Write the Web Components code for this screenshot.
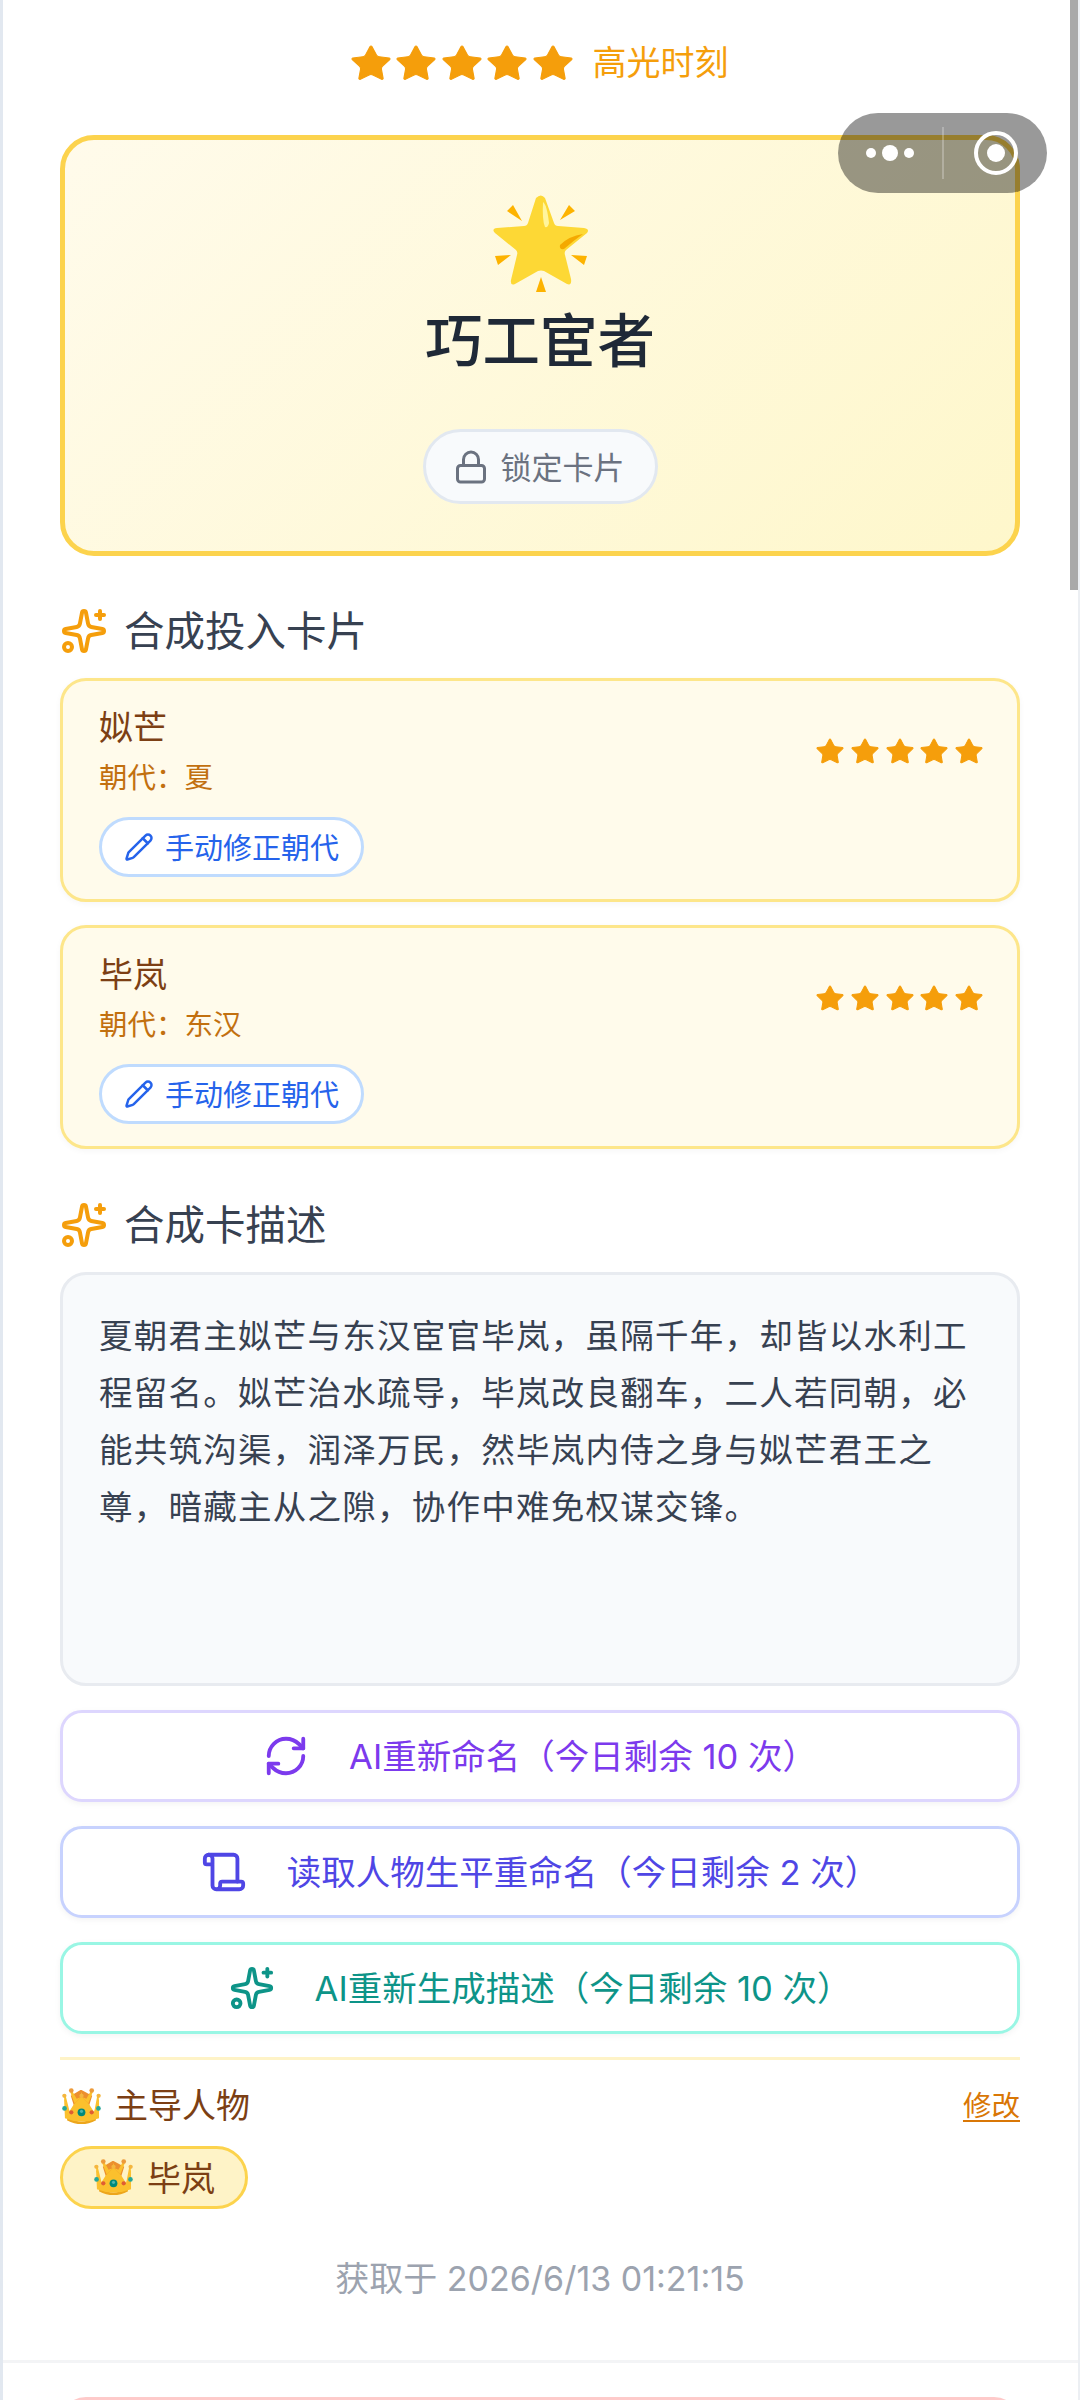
<!DOCTYPE html>
<html lang="zh-CN">
<head>
<meta charset="utf-8">
<title>高光时刻</title>
<style>
  html,body{margin:0;padding:0;background:#fff}
  body{width:1080px;height:2400px;overflow:hidden;font-family:Inter,"Noto Sans CJK SC",sans-serif}
  app-page > *{flex:none}
  section-title{margin-top:50px}
  section-title + source-card{margin-top:22px}
  source-card + source-card{margin-top:23px}
  source-card + section-title{margin-top:51px}
  desc-box{margin-top:22px}
  action-button{margin-top:24px}
  lead-section{margin-top:23px}
  stamp-line{margin-top:45px}
</style>
</head>
<body>
<app-page>
  <rating-head>高光时刻</rating-head>
  <hero-card name="巧工宦者" lock="锁定卡片"></hero-card>

  <section-title>合成投入卡片</section-title>
  <source-card name="姒芒" dynasty="朝代：夏"></source-card>
  <source-card name="毕岚" dynasty="朝代：东汉"></source-card>

  <section-title>合成卡描述</section-title>
  <desc-box>夏朝君主姒芒与东汉宦官毕岚，虽隔千年，却皆以水利工程留名。姒芒治水疏导，毕岚改良翻车，二人若同朝，必能共筑沟渠，润泽万民，然毕岚内侍之身与姒芒君王之尊，暗藏主从之隙，协作中难免权谋交锋。</desc-box>

  <action-button icon="refresh" tone="violet">AI重新命名（今日剩余 10 次）</action-button>
  <action-button icon="scroll" tone="indigo">读取人物生平重命名（今日剩余 2 次）</action-button>
  <action-button icon="sparkles" tone="teal">AI重新生成描述（今日剩余 10 次）</action-button>

  <lead-section who="毕岚"></lead-section>
  <stamp-line>获取于 2026/6/13 01:21:15</stamp-line>
  <page-rule></page-rule>
  <notice-card></notice-card>
  <mini-capsule></mini-capsule>
</app-page>

<script>
(function () {
  const STAR = 'M11.525 2.295a.53.53 0 0 1 .95 0l2.31 4.679a2.123 2.123 0 0 0 1.595 1.16l5.166.756a.53.53 0 0 1 .294.904l-3.736 3.638a2.123 2.123 0 0 0-.611 1.878l.882 5.14a.53.53 0 0 1-.771.56l-4.618-2.428a2.122 2.122 0 0 0-1.973 0L6.396 21.01a.53.53 0 0 1-.77-.56l.881-5.139a2.122 2.122 0 0 0-.611-1.879L2.16 9.795a.53.53 0 0 1 .294-.906l5.165-.755a2.122 2.122 0 0 0 1.597-1.16z';
  const ICONS = {
    sparkles: '<path d="M11.017 2.814a1 1 0 0 1 1.966 0l1.051 5.558a2 2 0 0 0 1.594 1.594l5.558 1.051a1 1 0 0 1 0 1.966l-5.558 1.051a2 2 0 0 0-1.594 1.594l-1.051 5.558a1 1 0 0 1-1.966 0l-1.051-5.558a2 2 0 0 0-1.594-1.594l-5.558-1.051a1 1 0 0 1 0-1.966l5.558-1.051a2 2 0 0 0 1.594-1.594z"/><path d="M20 2v4"/><path d="M22 4h-4"/><circle cx="4" cy="20" r="2"/>',
    refresh: '<path d="M3 12a9 9 0 0 1 9-9 9.75 9.75 0 0 1 6.74 2.74L21 8"/><path d="M21 3v5h-5"/><path d="M21 12a9 9 0 0 1-9 9 9.75 9.75 0 0 1-6.74-2.74L3 16"/><path d="M8 16H3v5"/>',
    scroll: '<path d="M19 17V5a2 2 0 0 0-2-2H4"/><path d="M8 21h12a2 2 0 0 0 2-2v-1a1 1 0 0 0-1-1H11a1 1 0 0 0-1 1v1a2 2 0 1 1-4 0V5a2 2 0 1 0-4 0v2a1 1 0 0 0 1 1h3"/>',
    pencil: '<path d="M21.174 6.812a1 1 0 0 0-3.986-3.987L3.842 16.174a2 2 0 0 0-.5.83l-1.321 4.352a.5.5 0 0 0 .623.622l4.353-1.32a2 2 0 0 0 .83-.497z"/><path d="m15 5 4 4"/>',
    lock: '<rect x="3" y="11" width="18" height="11" rx="2"/><path d="M7 11V7a5 5 0 0 1 10 0v4"/>'
  };
  const icon = (n, size, sw) => '<svg width="' + size + '" height="' + size + '" viewBox="0 0 24 24" fill="none" stroke="currentColor" stroke-width="' + sw + '" stroke-linecap="round" stroke-linejoin="round" aria-hidden="true">' + ICONS[n] + '</svg>';
  const stars = (w, h, sw) => Array(5).fill('<svg width="' + w + '" height="' + h + '" viewBox="2 2 20 20" preserveAspectRatio="none" fill="#f59e0b" stroke="#f59e0b" stroke-width="' + sw + '" stroke-linejoin="round" style="overflow:visible"><path d="' + STAR + '"/></svg>').join('');

  // Noto-like 🌟 and 👑, no emoji font in the sandbox
  const GLOW = '<svg width="95" height="98" viewBox="0 0 95 98" aria-hidden="true">' +
    '<path d="M14 16 L20 10 L29 26Z M82 16 L76 10 L67 25Z M2 61 L18 60 L5 70Z M94 61 L78 60 L91 70Z M48 82 L43 97 L53 97Z" fill="#fdb300"/>' +
    '<path d="M43 3 Q48 -2 52 3 L61 28 Q62 31 65 31 L91 33 Q97 34 94 38 L73 55 Q71 57 72 60 L78 84 Q79 91 74 89 L51 76 Q48 75 45 76 L22 89 Q17 91 18 85 L24 60 Q25 57 23 55 L2 38 Q-2 34 4 33 L31 31 Q34 31 35 28Z" fill="#fdd835"/>' +
    '<path d="M50 7 Q54 10 56 28 Q55 33 52 32 Q49 25 50 7Z" fill="#fff59d"/>' +
    '<path d="M90 39 Q76 41 67 50 Q66 55 71 54 Q80 46 90 39Z" fill="#f4a900"/></svg>';
  const CROWN = (w, h) => '<svg width="' + w + '" height="' + h + '" viewBox="0 0 40 38" aria-hidden="true">' +
    '<path d="M6 30 Q20 39 34 30 L35 33 Q20 41 5 33Z" fill="#eda61c"/>' +
    '<path d="M9 8 L19 2 L20 2 L31 8 L26 24 L14 24Z" fill="#ec8f2d"/>' +
    '<path d="M2 9 L7 25 L12 17 L20 9 L28 17 L33 25 L38 9 L38 31 Q20 38 3 31Z" fill="#fbc02d"/>' +
    '<path d="M2 9 L4 9 L8 25 L6 28Z M38 9 L36 9 L33 25 L34 28Z" fill="#fbc02d"/>' +
    '<path d="M20 9 L13 16 L8 3 L10.5 3 L15 11Z M20 9 L27 16 L32 3 L29.5 3 L25 11Z M19 8 L20 4 L21 8Z" fill="#fbc02d"/>' +
    '<circle cx="2.4" cy="8" r="2.2" fill="#f4b63f"/><circle cx="37.6" cy="8" r="2.2" fill="#f4b63f"/><circle cx="9.5" cy="2.6" r="2.4" fill="#ec9a3a"/><circle cx="30.5" cy="2.6" r="2.4" fill="#ec9a3a"/><circle cx="20" cy="8" r="2.2" fill="#f4b63f"/>' +
    '<circle cx="20" cy="25" r="4" fill="#00897b"/><circle cx="20" cy="24" r="1.6" fill="#4db6ac"/>' +
    '<circle cx="9.5" cy="25" r="2.2" fill="#e05d33"/><circle cx="30.5" cy="25" r="2.2" fill="#e05d33"/>' +
    '<circle cx="2.6" cy="21" r="2.4" fill="#26a69a"/><circle cx="37.4" cy="21" r="2.4" fill="#26a69a"/></svg>';

  // base: builds an open shadow root from css + html
  class Base extends HTMLElement {
    connectedCallback() {
      if (this.shadowRoot) return;
      this.attachShadow({ mode: 'open' }).innerHTML = '<style>' + this.css() + '</style>' + this.html();
    }
    attr(n, d) { return this.getAttribute(n) !== null ? this.getAttribute(n) : (d || ''); }
  }

  class AppPage extends Base {
    css() { return `:host{display:flex;flex-direction:column;position:relative;box-sizing:border-box;width:1080px;height:2400px;padding:0 58px 0 57px;border-left:3px solid #e2e8f0;border-right:2px solid #eceff3;overflow:hidden;color:#1f2937}
      .bar{position:absolute;top:0;right:-2px;width:10px;height:590px;background:#a9a9a9}`; }
    html() { return '<slot></slot><div class="bar"></div>'; }
  }

  class RatingHead extends Base {
    css() { return `:host{display:flex;justify-content:center;align-items:center;margin-top:44px;height:38px}
      .s{display:flex;gap:7.5px;margin-right:21px}
      .t{font-size:34px;line-height:38px;color:#f59e0b}`; }
    html() { return '<div class="s">' + stars(38, 35, 0.6) + '</div><div class="t"><slot></slot></div>'; }
  }

  class HeroCard extends Base {
    css() { return `:host{display:flex;flex-direction:column;align-items:center;box-sizing:border-box;height:421px;margin-top:53px;padding-top:55px;border:5px solid #fcd34d;border-radius:34px;background:linear-gradient(135deg,#fffbeb,#fef7cb)}
      svg{display:block;flex:none}
      .n{margin-top:13px;font-size:57.5px;line-height:70px;font-weight:500;color:#1f2937}
      .l{display:flex;align-items:center;gap:12px;box-sizing:border-box;height:75px;margin-top:53px;padding:0 30px 0 27px;border:3px solid #e2e8f0;border-radius:38px;background:#f8fafc;color:#6b7280;font-size:31px}
      .l span{margin-top:-3px}`; }
    html() { return GLOW + '<div class="n">' + this.attr('name') + '</div><div class="l">' + icon('lock', 36, 2) + '<span>' + this.attr('lock') + '</span></div>'; }
  }

  class SectionTitle extends Base {
    css() { return `:host{display:flex;align-items:center;gap:16px;height:50px;font-size:40.5px;color:#374151}
      svg{display:block;color:#f59e0b}
      span{margin-top:-5px}`; }
    html() { return icon('sparkles', 48, 2) + '<span><slot></slot></span>'; }
  }

  class SourceCard extends Base {
    css() { return `:host{display:flex;justify-content:space-between;box-sizing:border-box;height:224px;padding:25px 35px 0 36px;border:3px solid #fde68a;border-radius:26px;background:#fffbeb;box-shadow:0 2px 6px rgba(0,0,0,.04)}
      .n{font-size:34px;line-height:44px;font-weight:400;color:#7c3f14}
      .d{margin-top:8px;font-size:28.5px;line-height:40px;color:#c2700f}
      .e{display:flex;align-items:center;gap:11px;box-sizing:border-box;width:265px;height:60px;margin-top:19px;padding-left:22px;border:3px solid #bfdbfe;border-radius:30px;background:#fff;color:#2563eb;font-size:29px;white-space:nowrap}
      .e span{margin-top:-2px}
      .s{display:flex;gap:8.7px;margin-top:33px}`; }
    html() { return '<div><div class="n">' + this.attr('name') + '</div><div class="d">' + this.attr('dynasty') + '</div><div class="e">' + icon('pencil', 30, 2) + '<span>手动修正朝代</span></div></div><div class="s">' + stars(26, 25, 0.8) + '</div>'; }
  }

  class DescBox extends Base {
    css() { return `:host{display:block;box-sizing:border-box;height:414px;padding:33px 32px 0 36px;border:3px solid #e8ebf0;border-radius:26px;background:#f8fafc;color:#374151;font-size:33.5px;line-height:57px;letter-spacing:1.25px}`; }
    html() { return '<slot></slot>'; }
  }

  const TONES = {
    violet: ['#7c3aed', '#ddd6fe'],
    indigo: ['#4f46e5', '#c7d2fe'],
    teal: ['#0d9488', '#99f6e4']
  };
  class ActionButton extends Base {
    css() {
      const t = TONES[this.attr('tone', 'violet')];
      return `:host{display:flex;align-items:center;justify-content:center;gap:40px;box-sizing:border-box;height:92px;border:3px solid ${t[1]};border-radius:22px;background:#fff;color:${t[0]};font-size:34.5px;font-weight:400;box-shadow:0 2px 6px rgba(0,0,0,.05);white-space:nowrap}
      svg{display:block;flex:none;margin-top:-1px}
      span{margin-top:-5px}`;
    }
    html() { return icon(this.attr('icon'), 46, 2) + '<span><slot></slot></span>'; }
  }

  class LeadSection extends Base {
    css() { return `:host{display:block;border-top:3px solid #fef3c7}
      .r{display:flex;align-items:center;height:48px;margin-top:22px;color:#7c3f14;font-size:34px;font-weight:400}
      .r svg{margin:0 13px 0 2px}
      .r span,.r a{margin-top:-5px}
      .r a{margin-left:auto;color:#d97706;font-size:28.5px;text-decoration:underline;text-underline-offset:4px}
      .p{display:inline-flex;align-items:center;gap:14px;box-sizing:border-box;height:63px;margin-top:16px;padding:0 30px 0 31px;border:3px solid #fcd34d;border-radius:32px;background:#fef3c7;color:#7c3f14;font-size:34px;font-weight:400}
      .p span{margin-top:-3px}
      svg{display:block;flex:none}`; }
    html() { return '<div class="r">' + CROWN(39, 37) + '<span>主导人物</span><a>修改</a></div><div class="p">' + CROWN(39, 37) + '<span>' + this.attr('who') + '</span></div>'; }
  }

  class StampLine extends Base {
    css() { return `:host{display:block;height:50px;text-align:center;color:#9ca3af;font-size:34px;line-height:50px}`; }
    html() { return '<slot></slot>'; }
  }

  class PageRule extends Base {
    css() { return `:host{display:block;height:3px;margin:56px -58px 0 -57px;background:#f3f4f6}`; }
    html() { return ''; }
  }

  class NoticeCard extends Base {
    css() { return `:host{display:block;height:120px;margin-top:34px;border:3px solid #fecaca;border-radius:26px;background:#fef2f2}`; }
    html() { return ''; }
  }

  // wechat mini program capsule, floats over the page
  class MiniCapsule extends Base {
    css() { return `:host{position:absolute;top:113px;left:835px;display:flex;align-items:center;box-sizing:border-box;width:209px;height:80px;border-radius:40px;background:rgba(0,0,0,.4)}
      .m{display:flex;align-items:center;justify-content:center;gap:6px;width:104px}
      .m i{display:block;width:10px;height:10px;border-radius:50%;background:#fff}
      .m i:nth-child(2){width:16px;height:16px}
      .v{width:2px;height:52px;background:rgba(255,255,255,.25)}
      .o{display:flex;align-items:center;justify-content:center;width:103px}
      .c{display:flex;align-items:center;justify-content:center;box-sizing:border-box;width:44px;height:44px;border:4px solid #fff;border-radius:50%}
      .c i{display:block;width:18px;height:18px;border-radius:50%;background:#fff}`; }
    html() { return '<div class="m"><i></i><i></i><i></i></div><div class="v"></div><div class="o"><div class="c"><i></i></div></div>'; }
  }

  const defs = { 'app-page': AppPage, 'rating-head': RatingHead, 'hero-card': HeroCard, 'section-title': SectionTitle, 'source-card': SourceCard, 'desc-box': DescBox, 'action-button': ActionButton, 'lead-section': LeadSection, 'stamp-line': StampLine, 'page-rule': PageRule, 'notice-card': NoticeCard, 'mini-capsule': MiniCapsule };
  Object.keys(defs).forEach(function (k) { customElements.define(k, defs[k]); });
})();
</script>
</body>
</html>
